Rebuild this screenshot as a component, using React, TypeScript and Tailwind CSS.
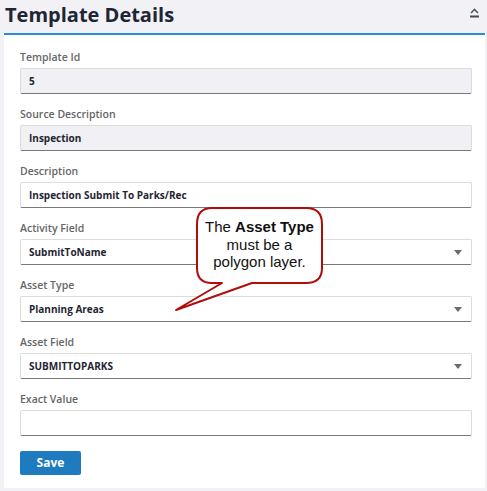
import React from 'react';

interface Field {
  label: string;
  value: string;
  kind: 'disabled' | 'text' | 'select';
}

const fields: Field[] = [
  { label: 'Template Id', value: '5', kind: 'disabled' },
  { label: 'Source Description', value: 'Inspection', kind: 'disabled' },
  { label: 'Description', value: 'Inspection Submit To Parks/Rec', kind: 'text' },
  { label: 'Activity Field', value: 'SubmitToName', kind: 'select' },
  { label: 'Asset Type', value: 'Planning Areas', kind: 'select' },
  { label: 'Asset Field', value: 'SUBMITTOPARKS', kind: 'select' },
  { label: 'Exact Value', value: '', kind: 'text' },
];

const FormField: React.FC<{ field: Field }> = ({ field }) => {
  const bg = field.kind === 'disabled' ? 'bg-[#f0f0f5]' : 'bg-white';
  return (
    <div className="mb-[13px]">
      <label className="block h-[14px] mb-[4px] text-[10.5px] leading-[14px] font-semibold text-[#666666]">
        {field.label}
      </label>
      <div
        className={`flex items-center h-[26px] pl-[8px] pr-[9px] rounded-[2px] border border-[#dcdcdc] border-b-[#7a7a7a] ${bg}`}
      >
        <span className="flex-1 text-[10px] font-bold text-[#1f2633]">{field.value}</span>
        {field.kind === 'select' && (
          <svg width="8" height="5" viewBox="0 0 8 5">
            <path d="M0 0 L8 0 L4 5 Z" fill="#6b6b6b" />
          </svg>
        )}
      </div>
    </div>
  );
};

const Callout: React.FC = () => (
  <div className="absolute left-[174px] top-[206px] w-[152px] h-[106px]">
    <svg width="152" height="106" viewBox="0 0 152 106" className="absolute inset-0">
      <path
        d="M38 2 H132 Q148 2 148 18 V62 Q148 77 132 77 H78 L2 104 L48 77 H38 Q23 77 23 62 V18 Q23 2 38 2 Z"
        fill="#ffffff"
        stroke="#b20d0d"
        strokeWidth="2"
        strokeLinejoin="round"
      />
    </svg>
    <div className="absolute left-[23px] top-[12px] w-[125px] text-center text-[15px] leading-[17.5px] text-[#111] [font-family:'Liberation_Sans',Arial,sans-serif]">
      The <b>Asset Type</b>
      <br />
      must be a
      <br />
      polygon layer.
    </div>
  </div>
);

const App: React.FC = () => {
  return (
    <div className="relative w-[487px] h-[491px] bg-[#f1f1f6] pl-[4px] pr-[2px] [font-family:'Open_Sans',sans-serif]">
      <div className="flex items-start justify-between h-[35px] pl-[1px] pr-[5px] border-b-2 border-[#2b8be0]">
        <h1 className="mt-[1px] text-[20px] leading-[28px] font-bold text-[#1e2534]">Template Details</h1>
        <svg width="11" height="11" viewBox="0 0 11 11" className="mt-[7px]">
          <path d="M2 6 L5.5 2.5 L9 6" fill="none" stroke="#4a5a70" strokeWidth="1.6" />
          <rect x="1" y="8.5" width="9" height="2" fill="#4a4a4a" />
        </svg>
      </div>
      <div className="bg-white h-[453px] pt-[15px] pl-[16px] pr-[13px]">
        {fields.map((f) => (
          <FormField key={f.label} field={f} />
        ))}
        <button className="w-[61px] h-[24px] rounded-[2px] bg-[#1f7bbf] text-white text-[12px] font-bold">
          Save
        </button>
      </div>
      <Callout />
    </div>
  );
};

export default App;
